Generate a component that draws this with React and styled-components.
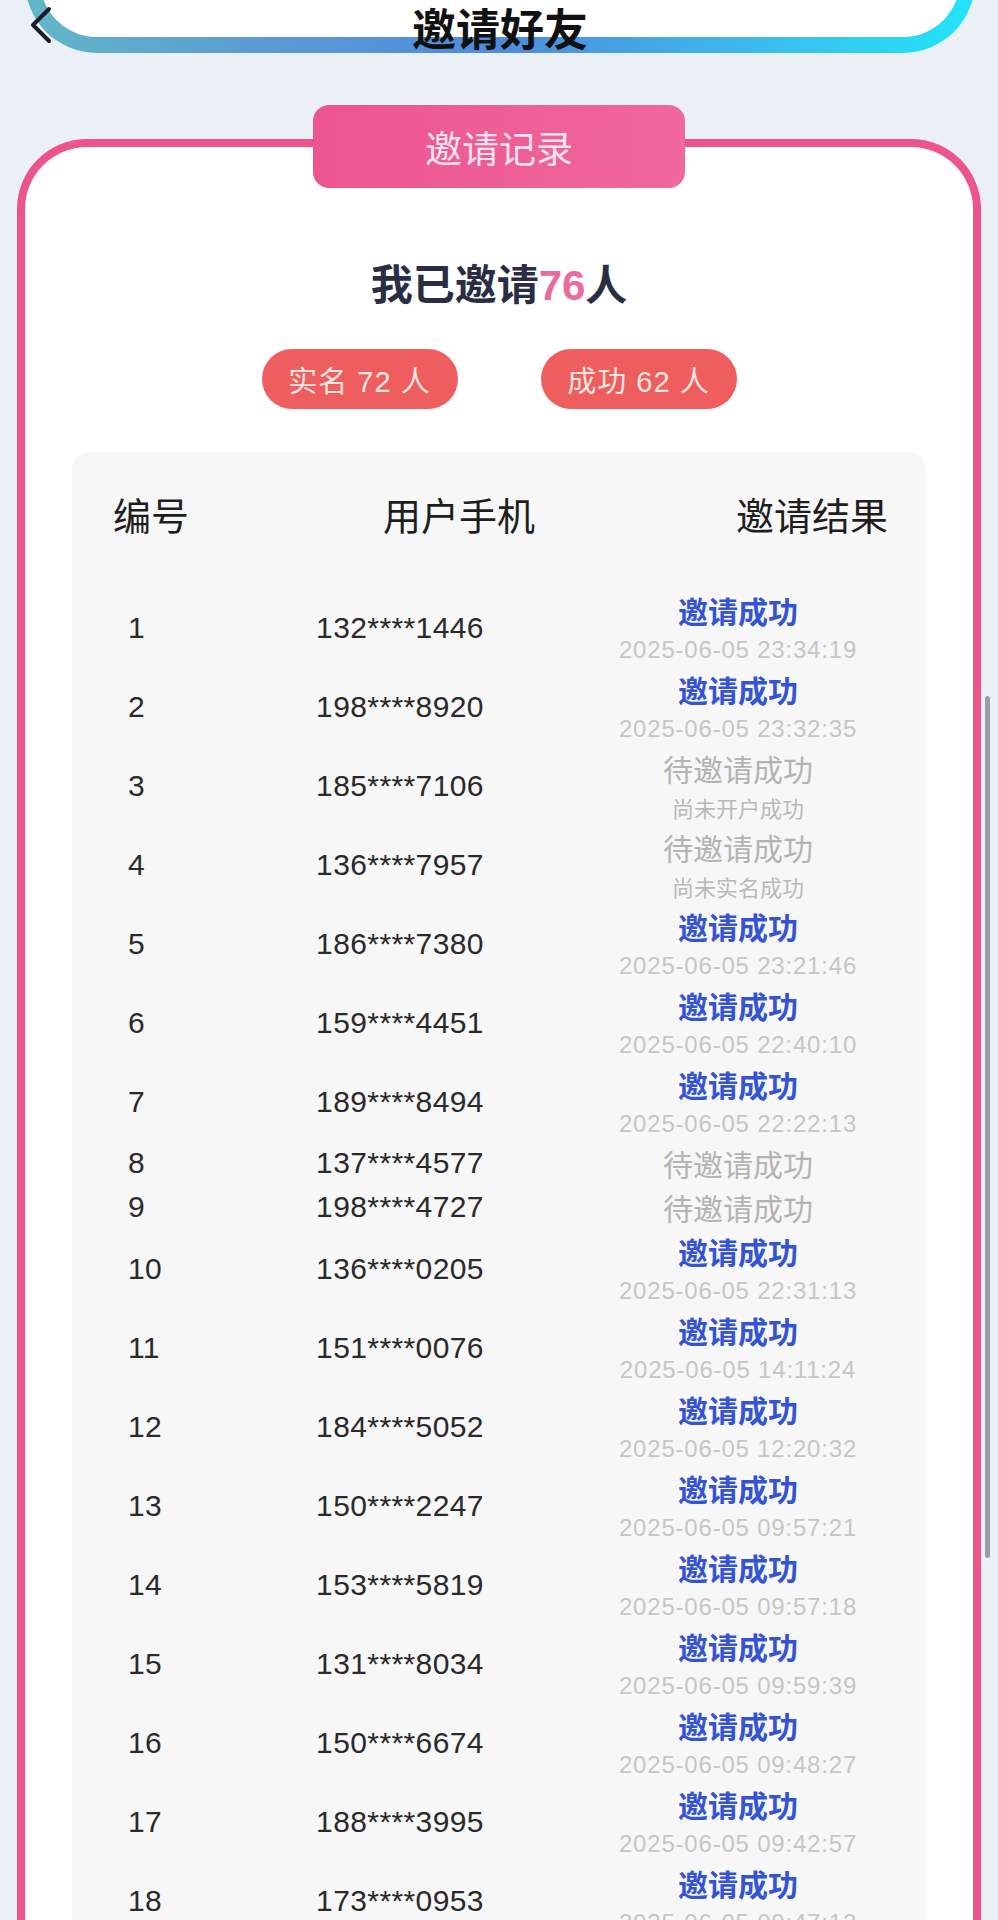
import React from "react";
import styled, { createGlobalStyle } from "styled-components";

const GlobalStyle = createGlobalStyle`
  html, body {
    margin: 0;
    padding: 0;
    background: #ebf0f7;
  }
  body {
    font-family: "Liberation Sans", "Noto Sans CJK SC", sans-serif;
  }
`;

const Page = styled.div`
  position: relative;
  width: 998px;
  height: 1920px;
  overflow: hidden;
  background: #ebf0f7;
`;

const HeaderFrame = styled.header`
  margin: -40px 23px 0 25px;
  height: 93px;
  box-sizing: border-box;
  padding: 0 15px 16px;
  border-radius: 0 0 72px 72px;
  background: linear-gradient(
    90deg,
    #63b6c6 0%,
    #5b9bd3 25%,
    #4f8bdb 50%,
    #3bbdee 78%,
    #22e5f8 100%
  );
`;

const HeaderInner = styled.div`
  height: 100%;
  background: #fff;
  border-radius: 0 0 57px 57px;
  display: flex;
  justify-content: center;
  align-items: flex-end;
`;

const PageTitle = styled.h1`
  margin: 0 0 -12px;
  font-family: "Noto Sans CJK SC", sans-serif;
  font-size: 44px;
  line-height: 44px;
  font-weight: 700;
  color: #111;
`;

const BackButton = styled.svg`
  position: absolute;
  left: 27px;
  top: 5px;
`;

const Card = styled.section`
  margin: 86px 17px 0;
  min-height: 1800px;
  border: 8px solid #ee548c;
  border-bottom: none;
  border-radius: 70px 70px 0 0;
  background: #fff;
  display: flex;
  flex-direction: column;
  align-items: center;
`;

const Tab = styled.div`
  margin-top: -42px;
  width: 372px;
  height: 83px;
  border-radius: 16px;
  background: linear-gradient(90deg, #ec5590, #f0679d);
  display: flex;
  align-items: center;
  justify-content: center;
  font-family: "Noto Sans CJK SC", sans-serif;
  font-size: 37px;
  color: #fce3ee;
`;

const Summary = styled.h2`
  margin: 73px 0 0;
  font-size: 42px;
  line-height: 50px;
  font-weight: 700;
  color: #2a2e44;
`;

const Count = styled.span`
  color: #e96c9d;
`;

const PillRow = styled.div`
  margin-top: 38px;
  display: flex;
  gap: 83px;
`;

const Pill = styled.div`
  width: 196px;
  height: 60px;
  border-radius: 30px;
  background: #ef5e5e;
  color: #fde6e0;
  font-size: 29px;
  letter-spacing: 1px;
  display: flex;
  align-items: center;
  justify-content: center;
`;

const Table = styled.div`
  margin-top: 43px;
  width: 854px;
  box-sizing: border-box;
  padding-top: 39px;
  border-radius: 18px;
  background: #f7f7f8;
  flex: 1;
`;

const HeadRow = styled.div`
  display: grid;
  grid-template-columns: 230px 232px 1fr;
  padding: 0 38px 0 41px;
  font-family: "Noto Sans CJK SC", sans-serif;
  font-size: 38px;
  line-height: 46px;
  color: #1e1e1e;
`;

const HeadCell = styled.div`
  text-align: ${({ align }) => align || "left"};
`;

const Body = styled.div`
  margin-top: 51px;
`;

const Row = styled.div`
  display: grid;
  grid-template-columns: 150px 244px 1fr;
  padding-left: 56px;
  align-items: center;
  color: #2a2a2a;
  font-size: 30px;
`;

const NumCell = styled.div`
  letter-spacing: 0.2px;
`;

const PhoneCell = styled.div`
  text-align: center;
  letter-spacing: 0.4px;
`;

const ResultCell = styled.div`
  padding-left: 28px;
  display: flex;
  flex-direction: column;
  align-items: center;
`;

const Status = styled.div`
  font-family: "Noto Sans CJK SC", sans-serif;
  font-size: 30px;
  line-height: 44px;
  font-weight: ${({ done }) => (done ? 600 : 400)};
  color: ${({ done }) => (done ? "#3554d3" : "#b3b3b3")};
`;

const Stamp = styled.div`
  font-size: 24px;
  line-height: 35px;
  letter-spacing: 0.8px;
  color: #c6c6c6;
`;

const Note = styled.div`
  font-family: "Noto Sans CJK SC", sans-serif;
  font-size: 22px;
  line-height: 35px;
  color: #b9b9b9;
`;

const ScrollThumb = styled.div`
  position: absolute;
  left: 985px;
  top: 696px;
  width: 5px;
  height: 862px;
  border-radius: 3px;
  background: #9c9ca8;
`;

const records = [
  ["132****1446", true, "2025-06-05 23:34:19"],
  ["198****8920", true, "2025-06-05 23:32:35"],
  ["185****7106", false, "尚未开户成功"],
  ["136****7957", false, "尚未实名成功"],
  ["186****7380", true, "2025-06-05 23:21:46"],
  ["159****4451", true, "2025-06-05 22:40:10"],
  ["189****8494", true, "2025-06-05 22:22:13"],
  ["137****4577", false, ""],
  ["198****4727", false, ""],
  ["136****0205", true, "2025-06-05 22:31:13"],
  ["151****0076", true, "2025-06-05 14:11:24"],
  ["184****5052", true, "2025-06-05 12:20:32"],
  ["150****2247", true, "2025-06-05 09:57:21"],
  ["153****5819", true, "2025-06-05 09:57:18"],
  ["131****8034", true, "2025-06-05 09:59:39"],
  ["150****6674", true, "2025-06-05 09:48:27"],
  ["188****3995", true, "2025-06-05 09:42:57"],
  ["173****0953", true, "2025-06-05 09:47:12"],
];

export default function App() {
  return (
    <Page>
      <GlobalStyle />
      <HeaderFrame>
        <HeaderInner>
          <PageTitle>邀请好友</PageTitle>
        </HeaderInner>
      </HeaderFrame>
      <BackButton width="26" height="40" viewBox="0 0 26 40">
        <polyline
          points="22,4 6,20 22,36"
          fill="none"
          stroke="#1b1d2a"
          strokeWidth="4"
          strokeLinecap="round"
          strokeLinejoin="round"
        />
      </BackButton>

      <Card>
        <Tab>邀请记录</Tab>
        <Summary>
          我已邀请<Count>76</Count>人
        </Summary>
        <PillRow>
          <Pill>实名 72 人</Pill>
          <Pill>成功 62 人</Pill>
        </PillRow>

        <Table>
          <HeadRow>
            <HeadCell>编号</HeadCell>
            <HeadCell align="center">用户手机</HeadCell>
            <HeadCell align="right">邀请结果</HeadCell>
          </HeadRow>
          <Body>
            {records.map(([phone, done, extra], i) => (
              <Row key={i}>
                <NumCell>{i + 1}</NumCell>
                <PhoneCell>{phone}</PhoneCell>
                <ResultCell>
                  <Status done={done}>{done ? "邀请成功" : "待邀请成功"}</Status>
                  {done && <Stamp>{extra}</Stamp>}
                  {!done && extra && <Note>{extra}</Note>}
                </ResultCell>
              </Row>
            ))}
          </Body>
        </Table>
      </Card>

      <ScrollThumb />
    </Page>
  );
}
